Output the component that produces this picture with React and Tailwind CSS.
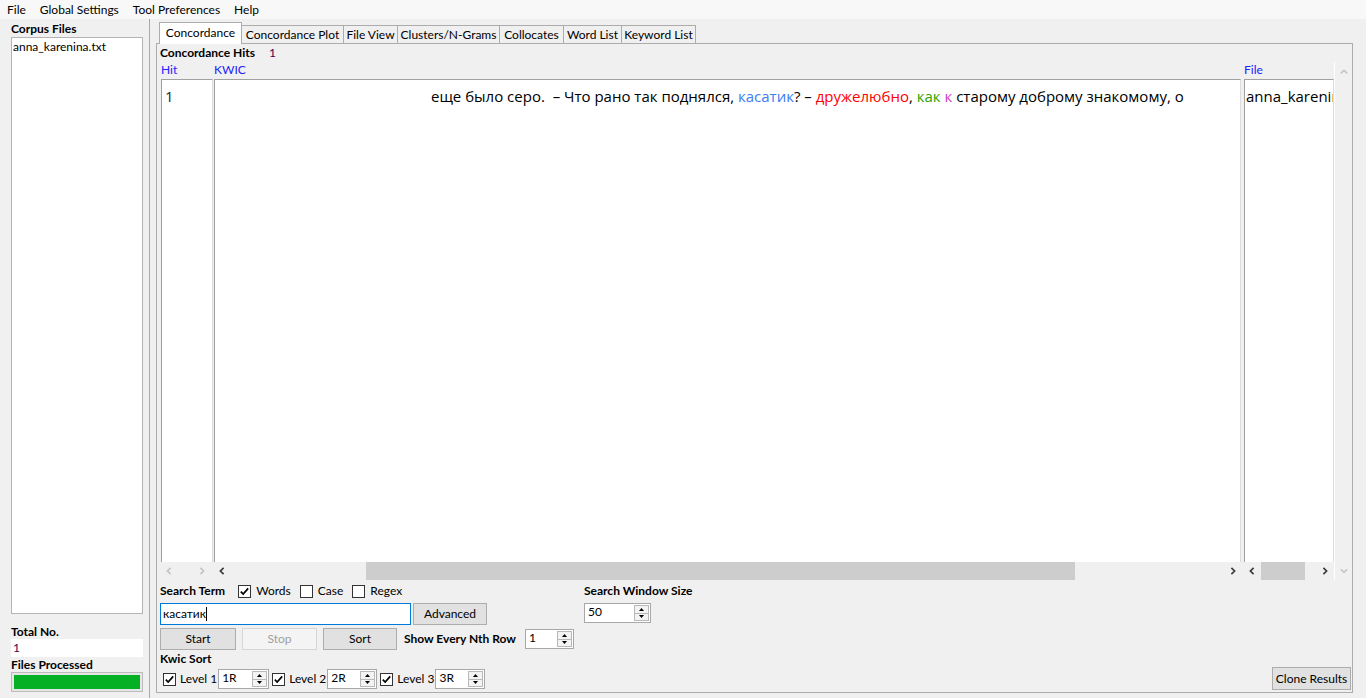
import React from 'react';

const ui = "font-[family-name:Lato,'Open_Sans',sans-serif]";
const text = "font-[family-name:'Open_Sans',sans-serif]";

function Chevron({ dir, light }) {
  const color = light ? '#c4c4c4' : '#3c3c3c';
  const d = {
    left: 'M4.6 0.8 L1.4 4 L4.6 7.2',
    right: 'M1.4 0.8 L4.6 4 L1.4 7.2',
  }[dir];
  return (
    <svg width="6" height="8" viewBox="0 0 6 8">
      <path d={d} fill="none" stroke={color} strokeWidth="1.7" />
    </svg>
  );
}

function VChevron({ dir }) {
  const d = dir === 'up' ? 'M0.8 4.4 L4 1.2 L7.2 4.4' : 'M0.8 1.2 L4 4.4 L7.2 1.2';
  return (
    <svg width="8" height="6" viewBox="0 0 8 6">
      <path d={d} fill="none" stroke="#c4c4c4" strokeWidth="1.5" />
    </svg>
  );
}

function Checkbox({ checked }) {
  return (
    <span className="w-[13px] h-[13px] shrink-0 border border-[#333333] bg-white flex items-center justify-center">
      {checked && (
        <svg width="11" height="11" viewBox="0 0 11 11">
          <path d="M1.8 5.6 L4.2 8.1 L9.2 2.4" fill="none" stroke="#000" strokeWidth="1.7" />
        </svg>
      )}
    </span>
  );
}

function Spinner({ value, width }) {
  return (
    <div className={`${width} h-[20px] shrink-0 bg-white border border-[#a8a8a8] flex`}>
      <span className="flex-1 pl-[3px] leading-[15px]">{value}</span>
      <div className="w-[15px] my-[1px] mr-[1px] flex flex-col">
        <span className="flex-1 border border-[#b8b8b8] bg-[#f3f3f3] flex items-center justify-center">
          <svg width="5" height="3" viewBox="0 0 5 3">
            <path d="M0 3 L2.5 0 L5 3Z" fill="#000" />
          </svg>
        </span>
        <span className="flex-1 border border-t-0 border-[#b8b8b8] bg-[#f3f3f3] flex items-center justify-center">
          <svg width="5" height="3" viewBox="0 0 5 3">
            <path d="M0 0 L2.5 3 L5 0Z" fill="#000" />
          </svg>
        </span>
      </div>
    </div>
  );
}

function Button({ label, width, disabled }) {
  return (
    <div
      className={`${width} h-[22px] shrink-0 flex items-center justify-center border ${
        disabled ? 'border-[#d6d6d6] bg-[#f4f4f4] text-[#a0a0a0]' : 'border-[#adadad] bg-[#e1e1e1]'
      }`}
    >
      {label}
    </div>
  );
}

const tabs = [
  { name: 'Concordance Plot', w: 'w-[102px]' },
  { name: 'File View', w: 'w-[54px]' },
  { name: 'Clusters/N-Grams', w: 'w-[102px]' },
  { name: 'Collocates', w: 'w-[64px]' },
  { name: 'Word List', w: 'w-[58px]' },
  { name: 'Keyword List', w: 'w-[74px]' },
];

function Column({ title, children, scroll, className }) {
  return (
    <div className={`flex flex-col ${className}`}>
      <div className="h-[17px] leading-[16px] text-[#2222ff]">{title}</div>
      <div className="flex-1 bg-white border-t border-l border-[#a0a0a0] border-r border-r-[#dcdcdc] overflow-hidden">
        {children}
      </div>
      <div className="h-[18px] flex items-center">{scroll}</div>
    </div>
  );
}

export default function App() {
  return (
    <div className={`w-[1366px] h-[698px] bg-[#f0f0f0] overflow-hidden text-[12px] text-black flex flex-col ${ui}`}>
      {/* menu */}
      <div className="h-[19px] bg-[#f8f8f8] flex items-center pl-[7px] gap-[14px] leading-[19px]">
        <span>File</span>
        <span>Global Settings</span>
        <span>Tool Preferences</span>
        <span>Help</span>
      </div>

      <div className="flex-1 flex">
        {/* corpus files */}
        <div className="w-[146px] pl-[11px] pr-[3px] pt-[3px] pb-[6px] flex flex-col">
          <div className="h-[14px] leading-[14px] font-bold">Corpus Files</div>
          <div className="flex-1 mt-[1px] bg-white border border-[#b4b4b4] pl-[1px] leading-[18px]">
            anna_karenina.txt
          </div>
          <div className="mt-[11px] h-[14px] leading-[14px] font-bold">Total No.</div>
          <div className="h-[18px] bg-white pl-[2px] leading-[18px] text-[#4b004b]">1</div>
          <div className="h-[15px] leading-[15px] font-bold">Files Processed</div>
          <div className="h-[20px] border border-[#bcbcbc] bg-[#e6e6e6] p-[2px]">
            <div className="h-full bg-[#06b025]"></div>
          </div>
        </div>

        {/* split divider */}
        <div className="w-[10px] pl-[3px]">
          <div className="w-px h-full bg-[#a8a8a8]"></div>
        </div>

        {/* tabbed pane */}
        <div className="flex-1 flex flex-col pt-[3px] pr-[13px] pb-[5px]">
          <div className="flex h-[21px] ml-[3px]">
            <div className="w-[83px] h-[22px] relative z-10 bg-white border border-b-0 border-[#acacac] flex items-center justify-center pb-[2px]">
              Concordance
            </div>
            {tabs.map((t) => (
              <div
                key={t.name}
                className={`${t.w} h-[18px] mt-[3px] border-t border-r border-[#acacac] flex items-center justify-center`}
              >
                {t.name}
              </div>
            ))}
          </div>

          <div className="flex-1 border border-[#adadad] flex flex-col">
            <div className="mt-[2px] h-[14px] leading-[14px] pl-[3px] flex">
              <span className="font-bold">Concordance Hits</span>
              <span className="ml-[14px] text-[#4b004b]">1</span>
            </div>

            {/* table */}
            <div className="mt-[2px] flex-1 flex pl-[4px]">
              <Column
                title="Hit"
                className="w-[52px]"
                scroll={
                  <div className="w-full flex justify-between pl-[5px] pr-[8px]">
                    <Chevron dir="left" light />
                    <Chevron dir="right" light />
                  </div>
                }
              >
                <div className={`pt-[6px] pl-[3px] text-[15px] leading-[20px] text-[#1c1c2c] ${text}`}>1</div>
              </Column>

              <Column
                title="KWIC"
                className="flex-1 ml-px"
                scroll={
                  <div className="w-full h-full flex items-center">
                    <div className="w-[15px] flex justify-center">
                      <Chevron dir="left" />
                    </div>
                    <div className="flex-1 h-full flex">
                      <div className="ml-[137px] w-[709px] h-full bg-[#cdcdcd]"></div>
                    </div>
                    <div className="w-[16px] flex justify-center">
                      <Chevron dir="right" />
                    </div>
                  </div>
                }
              >
                <div className={`flex whitespace-pre pt-[6px] text-[15px] leading-[20px] ${text}`}>
                  <div className="w-[523px] shrink-0 flex justify-end overflow-hidden">
                    <span>еще было серо.  – Что рано так поднялся, </span>
                  </div>
                  <span className="text-[#3e7cf0]">касатик</span>
                  <span>? – </span>
                  <span className="text-[#ff0000]">дружелюбно</span>
                  <span>, </span>
                  <span className="text-[#2fa300]">как</span>
                  <span> </span>
                  <span className="text-[#cc3fcc]">к</span>
                  <span> старому доброму знакомому, о</span>
                </div>
              </Column>

              <Column
                title="File"
                className="w-[90px] ml-[3px]"
                scroll={
                  <div className="w-full h-full flex items-center">
                    <div className="w-[16px] flex justify-center">
                      <Chevron dir="left" />
                    </div>
                    <div className="ml-px w-[44px] h-full bg-[#cdcdcd]"></div>
                    <div className="flex-1 flex justify-end pr-[6px]">
                      <Chevron dir="right" />
                    </div>
                  </div>
                }
              >
                <div className={`pt-[6px] pl-[1px] text-[15px] leading-[20px] whitespace-nowrap ${text}`}>
                  anna_karenina.txt
                </div>
              </Column>

              <div className="w-[18px] flex flex-col justify-between items-center border-l border-white pt-[7px] pb-[6px]">
                <VChevron dir="up" />
                <VChevron dir="down" />
              </div>
            </div>

            {/* search controls */}
            <div className="h-[112px] flex pl-[3px] pr-[1px] pb-[2px]">
              <div className="w-[424px] flex flex-col pt-[4px]">
                <div className="h-[14px] flex items-center">
                  <span className="font-bold">Search Term</span>
                  <span className="ml-[13px]"><Checkbox checked /></span>
                  <span className="ml-[5px]">Words</span>
                  <span className="ml-[9px]"><Checkbox /></span>
                  <span className="ml-[5px]">Case</span>
                  <span className="ml-[9px]"><Checkbox /></span>
                  <span className="ml-[5px]">Regex</span>
                </div>
                <div className="mt-[5px] h-[22px] flex">
                  <div className="w-[251px] h-[22px] bg-white border border-[#0078d7] flex items-center pl-[2px]">
                    <span className="border-r border-black leading-[14px]">касатик</span>
                  </div>
                  <div className="ml-[2px]">
                    <Button label="Advanced" width="w-[74px]" />
                  </div>
                </div>
                <div className="mt-[3px] h-[22px] flex items-center">
                  <Button label="Start" width="w-[76px]" />
                  <div className="ml-[6px]">
                    <Button label="Stop" width="w-[75px]" disabled />
                  </div>
                  <div className="ml-[6px]">
                    <Button label="Sort" width="w-[74px]" />
                  </div>
                  <span className="ml-[7px] font-bold whitespace-nowrap">Show Every Nth Row</span>
                  <div className="ml-[9px]">
                    <Spinner value="1" width="w-[49px]" />
                  </div>
                </div>
                <div className="mt-[2px] h-[14px] leading-[14px] font-bold">Kwic Sort</div>
                <div className="mt-[3px] h-[20px] flex items-center">
                  <span className="ml-[3px]"><Checkbox checked /></span>
                  <span className="ml-[4px]">Level 1</span>
                  <span className="ml-[1px]"><Spinner value="1R" width="w-[51px]" /></span>
                  <span className="ml-[3px]"><Checkbox checked /></span>
                  <span className="ml-[4px]">Level 2</span>
                  <span className="ml-[1px]"><Spinner value="2R" width="w-[50px]" /></span>
                  <span className="ml-[3px]"><Checkbox checked /></span>
                  <span className="ml-[4px]">Level 3</span>
                  <span className="ml-[1px]"><Spinner value="3R" width="w-[50px]" /></span>
                </div>
              </div>

              <div className="flex flex-col pt-[4px]">
                <div className="h-[14px] leading-[14px] font-bold">Search Window Size</div>
                <div className="mt-[5px]">
                  <Spinner value="50" width="w-[67px]" />
                </div>
              </div>

              <div className="flex-1 flex justify-end items-end">
                <Button label="Clone Results" width="w-[79px] h-[23px]" />
              </div>
            </div>
          </div>
        </div>
      </div>
    </div>
  );
}
